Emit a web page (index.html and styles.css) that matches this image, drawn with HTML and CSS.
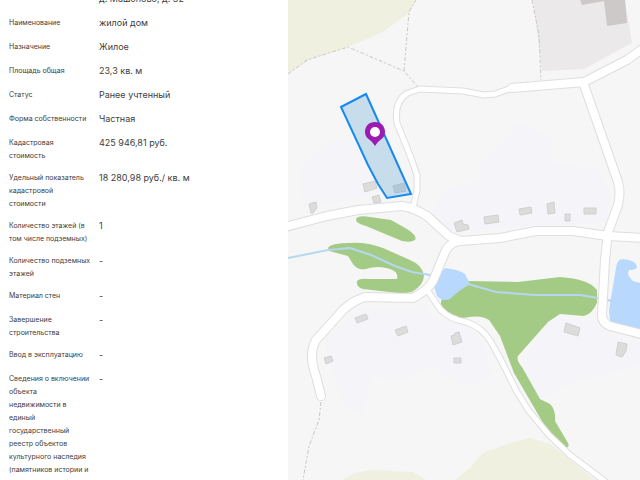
FILE: index.html
```html
<!DOCTYPE html>
<html lang="ru">
<head>
<meta charset="utf-8">
<title>Сведения об объекте</title>
<link rel="stylesheet" href="styles.css">
</head>
<body>
<main class="layout">
  <section class="details" aria-label="Сведения об объекте">
    <dl class="facts">
      <div class="fact"><dt></dt><dd>д. Машоново, д. 32</dd></div>
      <div class="fact"><dt>Наименование</dt><dd>жилой дом</dd></div>
      <div class="fact"><dt>Назначение</dt><dd>Жилое</dd></div>
      <div class="fact"><dt>Площадь общая</dt><dd>23,3 кв. м</dd></div>
      <div class="fact"><dt>Статус</dt><dd>Ранее учтенный</dd></div>
      <div class="fact"><dt>Форма собственности</dt><dd>Частная</dd></div>
      <div class="fact"><dt>Кадастровая стоимость</dt><dd>425 946,81 руб.</dd></div>
      <div class="fact"><dt>Удельный показатель кадастровой стоимости</dt><dd>18 280,98 руб./ кв. м</dd></div>
      <div class="fact"><dt>Количество этажей (в том числе подземных)</dt><dd>1</dd></div>
      <div class="fact"><dt>Количество подземных этажей</dt><dd>-</dd></div>
      <div class="fact"><dt>Материал стен</dt><dd>-</dd></div>
      <div class="fact"><dt>Завершение строительства</dt><dd>-</dd></div>
      <div class="fact"><dt>Ввод в эксплуатацию</dt><dd>-</dd></div>
      <div class="fact"><dt>Сведения о включении объекта недвижимости&nbsp;в единый государственный реестр объектов культурного наследия (памятников истории и</dt><dd>-</dd></div>
    </dl>
  </section>
  <section class="map" aria-label="Карта">
    <svg class="map-canvas" viewBox="288 0 352 480" preserveAspectRatio="xMidYMin slice">
      <!-- fields -->
      <g class="field">
        <path d="M288 0H416L409 13L383 32L348 47L311 59L288 74Z"/>
        <path d="M343 480L355 473L372 470L413 472L426 480Z"/>
        <path d="M455 480L470 468L483 453L510 443L530 438L550 444L595 480Z"/>
      </g>
      <!-- residential areas -->
      <g class="homes">
        <path d="M300 168L331 141L352 140L380 192L350 200L303 208Z"/>
        <path d="M430 216L444 190L478 180L482 160L505 140L515 125L530 126L540 133L553 138L553 162L598 170L611 195L606 222L548 225L450 232Z"/>
        <path d="M325 339L360 309L425 306L433 318L465 322L482 342L492 380L460 384L430 365L405 380L372 377L362 416L346 408L330 365Z"/>
        <path d="M551 319L598 320L608 334L640 344V364L560 387L540 399L520 365Z"/>
      </g>
      <!-- yard -->
      <path class="yard" d="M533 0L542 71L584 69L632 43L625 0Z"/>
      <path class="yard-building" d="M580 0L582 5L604 1L607 26L627 23L625 0Z"/>
      <!-- woods -->
      <g class="wood">
        <path d="M356 219Q358 215 370 217L391 220L407 229Q418 236 415 240Q411 243 402 241L366 226Q355 223 356 219Z"/>
        <path d="M328 248Q331 243 350 243Q367 242 383 248L410 260Q422 265 424 275Q424 285 412 292Q403 294 389 292L363 289Q356 287 357 281Q360 278 368 279L397 279Q399 272 390 269Q378 265 366 269Q358 271 353 264L348 256L329 251Z"/>
        <path d="M441 304Q440 298 449 293L466 281L518 282L560 277Q589 279 597 290L597 303Q592 314 584 316L560 314L548 322L518 356Q516 360 522 367L540 399L550 404Q556 410 555 421L568 443Q570 447 566 448Q560 449 553 440L514 373L500 336L489 320Q481 314 463 318Q443 315 441 304Z"/>
      </g>
      <!-- water -->
      <path class="water" d="M436 274L446 268Q460 270 465 274L470 284L459 291L450 299Q442 302 437 296L434 286Z"/>
      <path class="water" d="M611 330L609 310L616 268Q617 259 623 259Q636 260 637 267Q637 270 629 270Q626 275 633 281L640 283V332L614 326Z"/>
      <g class="stream">
        <path d="M288 258L328 250L350 248L371 255L395 266L412 272L436 276"/>
        <path d="M468 284L496 292L535 295L580 295L598 298L612 301"/>
      </g>
      <!-- footpaths -->
      <g class="path">
        <path d="M288 74L307 60L348 47L404 71L418 87M404 71L409 12L416 0"/>
        <path d="M532 0L539 35L541 80"/>
        <path d="M321 402L319 420L309 446L303 480"/>
      </g>
      <!-- roads: grey casing, then white surface -->
      <g class="road-edge">
        <path class="small" d="M413 208L417 190V175L411 158L397 123Q394 100 408 93L420 89L463 91L484 95L495 94L512 88"/>
        <path class="small" d="M428 291L440 309Q449 319 466 322Q482 327 491 342L502 362L517 392L529 411L549 435L570 455L590 470L607 483"/>
        <path class="wide" d="M285 227L327 216L358 210L402 206Q412 207 427 216L449 236L461 241L500 238L536 231L573 231L608 236L646 238"/>
        <path class="wide" d="M512 88L584 82L627 60L645 47M583 82L618 182Q621 192 618 205L608 232L605 260L602 315Q602 323 610 326L645 335"/>
        <path class="wide" d="M460 241Q451 242 446 250L433 281Q427 291 413 298L365 297Q353 301 344 309L316 340Q312 347 312 356Q312 365 316 376L321 396"/>
      </g>
      <g class="road">
        <path class="small" d="M413 208L417 190V175L411 158L397 123Q394 100 408 93L420 89L463 91L484 95L495 94L512 88"/>
        <path class="small" d="M428 291L440 309Q449 319 466 322Q482 327 491 342L502 362L517 392L529 411L549 435L570 455L590 470L607 483"/>
        <path class="wide" d="M285 227L327 216L358 210L402 206Q412 207 427 216L449 236L461 241L500 238L536 231L573 231L608 236L646 238"/>
        <path class="wide" d="M512 88L584 82L627 60L645 47M583 82L618 182Q621 192 618 205L608 232L605 260L602 315Q602 323 610 326L645 335"/>
        <path class="wide" d="M460 241Q451 242 446 250L433 281Q427 291 413 298L365 297Q353 301 344 309L316 340Q312 347 312 356Q312 365 316 376L321 396"/>
      </g>
      <!-- buildings -->
      <g class="building">
        <path d="M309 204L316 202L317 208L313 213L311 213Z"/>
        <path d="M363 184L375 181L377 188L365 192Z"/>
        <path d="M372 197L379 195L381 202L374 203Z"/>
        <path d="M393 186L404 183L406 191L395 193Z"/>
        <path d="M454 223L462 220L463 224L468 225L469 229L457 232Z"/>
        <path d="M484 217L498 215L499 222L485 224Z"/>
        <path d="M519 209L531 207L532 213L520 215Z"/>
        <path d="M547 204L554 202L555 213L548 214Z"/>
        <path d="M565 214H570V221H565Z"/>
        <path d="M584 208H596V214H584Z"/>
        <path d="M355 318L366 314L368 319L357 323Z"/>
        <path d="M395 330L406 326L408 332L398 336Z"/>
        <path d="M324 358L331 356L333 361L326 364Z"/>
        <path d="M451 336L454 335L455 333L459 332L462 342L453 345Z"/>
        <path d="M454 358H461V363H454Z"/>
        <path d="M566 323L569 324L580 328L578 336L564 332Z"/>
        <path d="M618 342L627 344L626 351L622 357L616 355Z"/>
      </g>
      <!-- selected parcel and its pin -->
      <path class="parcel" d="M341 107L366 94L411 194L387 198L378 184L368 165Z"/>
      <path class="pin" d="M375 122C369 122 365 126 365 132C365 139 371 139 375 146C379 139 385 139 385 132C385 126 381 122 375 122Z"/>
      <circle class="pin-hole" cx="375" cy="132" r="5"/>
    </svg>
  </section>
</main>
</body>
</html>
```
FILE: styles.css
```css
* { box-sizing: border-box; }

body {
  margin: 0;
  background: #fff;
  color: #404040;
  font-family: Inter, "Liberation Sans", sans-serif;
}

.layout {
  display: grid;
  grid-template-columns: 45% 1fr;
  height: 100vh;
  overflow: hidden;
}

.details {
  overflow: hidden;
  padding-left: 9px;
}

.facts { margin: -8px 0 0; }

.fact {
  display: grid;
  grid-template-columns: 82px 1fr;
  column-gap: 8px;
  align-items: start;
  min-height: 24px;
  padding-bottom: 9px;
}

dt {
  font-size: 7px;
  line-height: 13px;
}

dd {
  margin: 0;
  font-size: 9px;
  line-height: 13px;
}

.map {
  overflow: hidden;
  background: #f6f6f6;
}

.map-canvas {
  display: block;
  width: 100%;
  height: 100%;
}

.field { fill: #eff0df; }
.homes { fill: #f4f4f9; }
.yard { fill: #ebe9ea; }
.yard-building { fill: #cdc9c8; }
.wood { fill: #a4cb86; }
.water { fill: #b8d8fd; }
.stream { fill: none; stroke: #b5d7ef; stroke-width: 2; }
.path { fill: none; stroke: #c8c8c8; stroke-width: 1; stroke-dasharray: 4 2 2 2; }

.road-edge, .road {
  fill: none;
  stroke-linecap: round;
  stroke-linejoin: round;
}
.road-edge { stroke: #dedede; }
.road-edge .wide { stroke-width: 10; }
.road-edge .small { stroke-width: 7; }
.road { stroke: #fff; }
.road .wide { stroke-width: 8; }
.road .small { stroke-width: 5; }

.building { fill: #dcdcdc; stroke: #d0d0d0; stroke-width: 1; }
.parcel { fill: #1e82c8; fill-opacity: 0.22; stroke: #168af0; stroke-width: 2; }
.pin { fill: #9c1bb0; }
.pin-hole { fill: #fff; }
```
